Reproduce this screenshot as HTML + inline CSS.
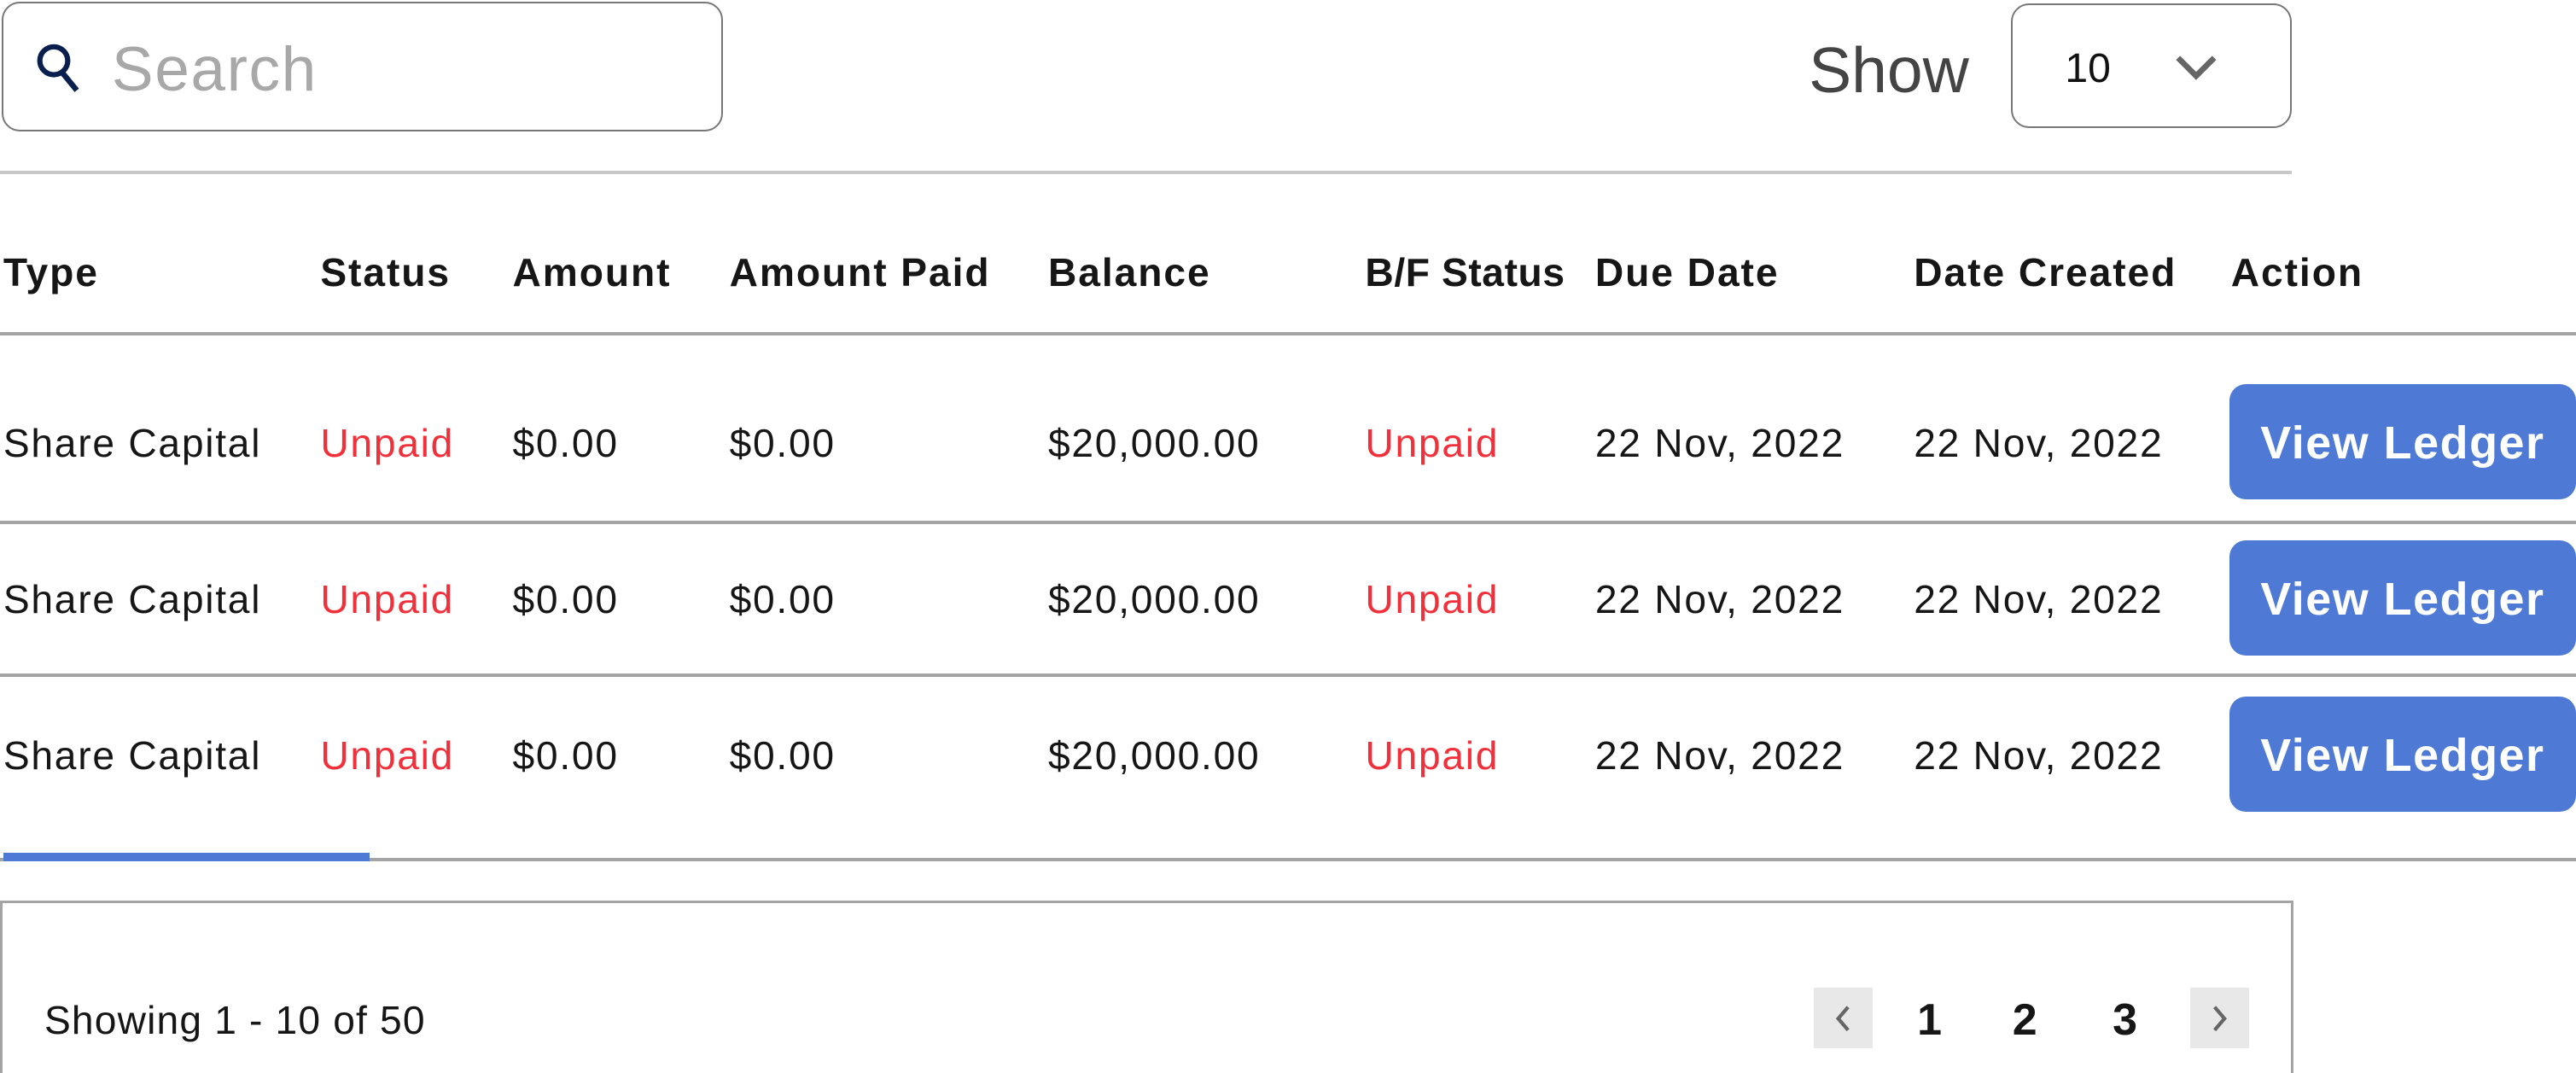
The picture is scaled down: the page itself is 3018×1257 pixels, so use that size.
<!DOCTYPE html>
<html><head><meta charset="utf-8"><style>
html,body{margin:0;padding:0;background:#fff;overflow:hidden}
body{width:3018px;height:1257px;position:relative}
#w{position:absolute;left:0;top:0;width:1568px;height:653px;zoom:1.9247;font-family:"Liberation Sans",sans-serif;color:#161616}
.a{position:absolute;white-space:nowrap}
.c{position:absolute;height:40px;line-height:40px;white-space:nowrap;font-size:24px;letter-spacing:0.9px}
.h{font-weight:bold;font-size:24px;letter-spacing:1px}
.r{color:#f0303a}
.btn{position:absolute;left:1357px;width:211px;height:70px;background:#4e7ad6;border-radius:10px;color:#fff;font-weight:bold;font-size:28px;line-height:72px;text-align:center;letter-spacing:0.8px}
.hl{position:absolute;left:0;width:1568px;height:2px;background:#a4a4a4}
</style></head><body><div id="w">
<div class="a" style="left:1px;top:1px;width:437px;height:77px;border:1.5px solid #777;border-radius:11px"></div>
<svg class="a" style="left:20px;top:26px" width="32" height="32" viewBox="0 0 32 32"><circle cx="13" cy="11" r="8.5" fill="none" stroke="#0b1f4f" stroke-width="3.2"/><path d="M18 18 L27 29" stroke="#0b1f4f" stroke-width="3.4"/></svg>
<div class="a" style="left:68px;top:20px;font-size:38px;line-height:46px;color:#a8a8a8;letter-spacing:0.8px">Search</div>
<div class="a" style="left:1101px;top:20px;font-size:39px;line-height:46px;color:#444">Show</div>
<div class="a" style="left:1224px;top:2px;width:169px;height:74px;border:1.5px solid #777;border-radius:11px"></div>
<div class="a" style="left:1257px;top:27px;font-size:25px;line-height:30px;color:#111">10</div>
<svg class="a" style="left:1323px;top:32px" width="28" height="18" viewBox="0 0 28 18"><path d="M3 3 L14 14 L25 3" fill="none" stroke="#666" stroke-width="3.5"/></svg>
<div class="a" style="left:0;top:104px;width:1395px;height:2px;background:#c8c8c8"></div>

<div class="c h" style="left:2px;top:146px">Type</div>
<div class="c h" style="left:195px;top:146px">Status</div>
<div class="c h" style="left:312px;top:146px">Amount</div>
<div class="c h" style="left:444px;top:146px">Amount Paid</div>
<div class="c h" style="left:638px;top:146px">Balance</div>
<div class="c h" style="left:831px;top:146px;letter-spacing:0.3px">B/F Status</div>
<div class="c h" style="left:971px;top:146px">Due Date</div>
<div class="c h" style="left:1165px;top:146px">Date Created</div>
<div class="c h" style="left:1358px;top:146px">Action</div>
<div class="hl" style="top:202px"></div>

<div class="c" style="left:2px;top:250px">Share Capital</div><div class="c r" style="left:195px;top:250px">Unpaid</div><div class="c" style="left:312px;top:250px">$0.00</div><div class="c" style="left:444px;top:250px">$0.00</div><div class="c" style="left:638px;top:250px">$20,000.00</div><div class="c r" style="left:831px;top:250px">Unpaid</div><div class="c" style="left:971px;top:250px">22 Nov, 2022</div><div class="c" style="left:1165px;top:250px">22 Nov, 2022</div>
<div class="btn" style="top:234px">View Ledger</div>
<div class="hl" style="top:317px"></div>

<div class="c" style="left:2px;top:345px">Share Capital</div><div class="c r" style="left:195px;top:345px">Unpaid</div><div class="c" style="left:312px;top:345px">$0.00</div><div class="c" style="left:444px;top:345px">$0.00</div><div class="c" style="left:638px;top:345px">$20,000.00</div><div class="c r" style="left:831px;top:345px">Unpaid</div><div class="c" style="left:971px;top:345px">22 Nov, 2022</div><div class="c" style="left:1165px;top:345px">22 Nov, 2022</div>
<div class="btn" style="top:329px">View Ledger</div>
<div class="hl" style="top:410px"></div>

<div class="c" style="left:2px;top:440px">Share Capital</div><div class="c r" style="left:195px;top:440px">Unpaid</div><div class="c" style="left:312px;top:440px">$0.00</div><div class="c" style="left:444px;top:440px">$0.00</div><div class="c" style="left:638px;top:440px">$20,000.00</div><div class="c r" style="left:831px;top:440px">Unpaid</div><div class="c" style="left:971px;top:440px">22 Nov, 2022</div><div class="c" style="left:1165px;top:440px">22 Nov, 2022</div>
<div class="btn" style="top:424px">View Ledger</div>
<div class="hl" style="top:522px"></div>
<div class="a" style="left:2px;top:519px;width:223px;height:5px;background:#4e7ad6"></div>

<div class="a" style="left:0;top:548px;width:1393px;height:110px;border:2px solid #a4a4a4"></div>
<div class="c" style="left:27px;top:601px;letter-spacing:0.6px">Showing 1 - 10 of 50</div>
<div class="a" style="left:1104px;top:601px;width:36px;height:37px;background:#e8e8e8"></div>
<svg class="a" style="left:1114px;top:610px" width="16" height="20" viewBox="0 0 16 20"><path d="M11 3 L5 10 L11 17" fill="none" stroke="#666" stroke-width="2.2"/></svg>
<div class="c h" style="left:1167px;top:601px;font-size:27px">1</div>
<div class="c h" style="left:1225px;top:601px;font-size:27px">2</div>
<div class="c h" style="left:1286px;top:601px;font-size:27px">3</div>
<div class="a" style="left:1333px;top:601px;width:36px;height:37px;background:#e8e8e8"></div>
<svg class="a" style="left:1343px;top:610px" width="16" height="20" viewBox="0 0 16 20"><path d="M5 3 L11 10 L5 17" fill="none" stroke="#666" stroke-width="2.2"/></svg>
</div></body></html>
